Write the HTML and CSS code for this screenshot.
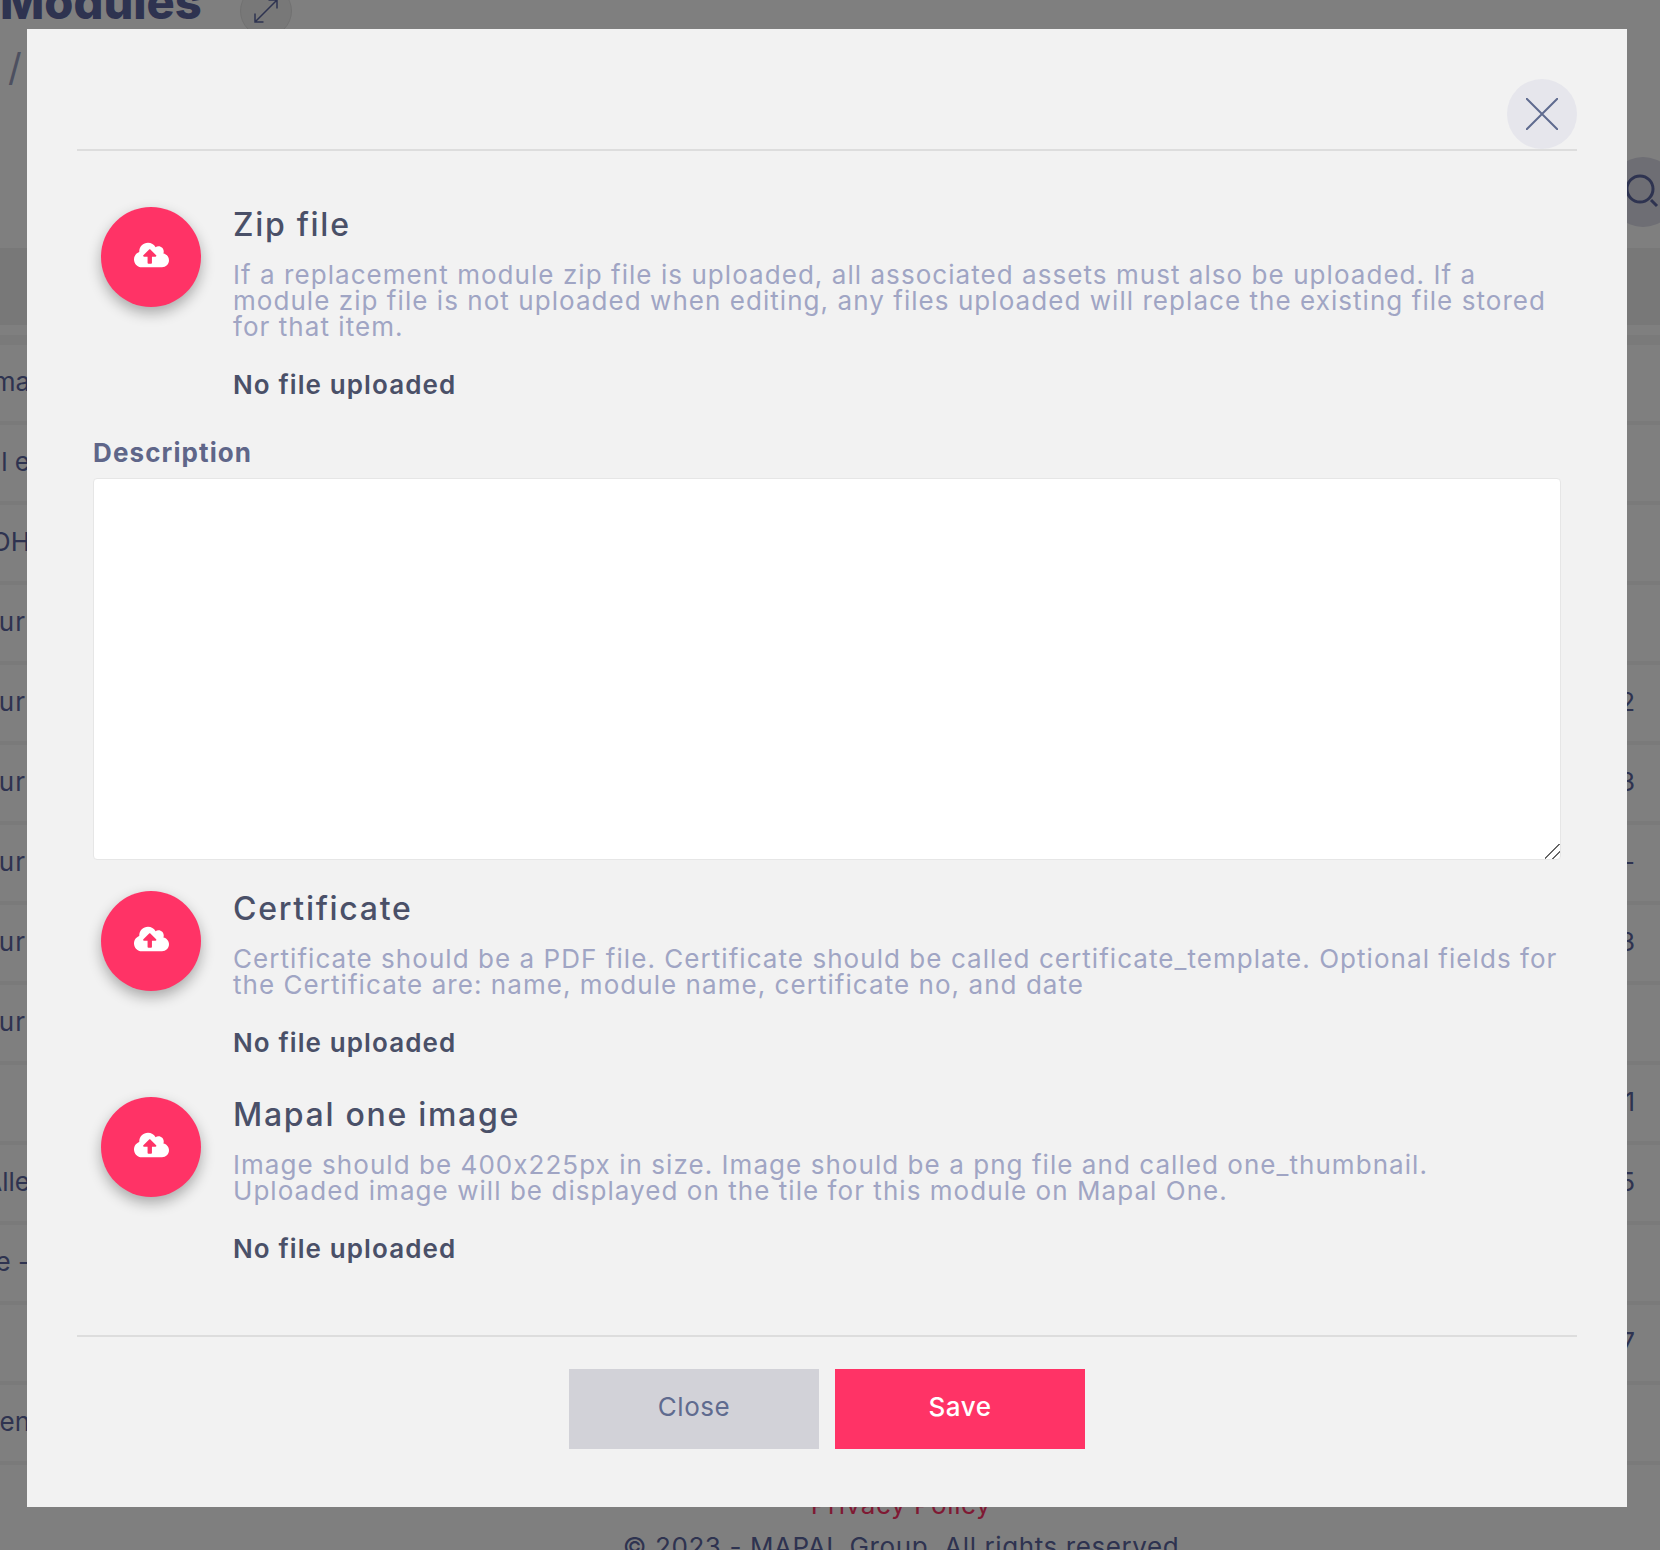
FILE: index.html
```html
<!DOCTYPE html>
<html lang="en">
<head>
    <meta charset="UTF-8">
    <meta name="viewport" content="width=device-width, initial-scale=1.0">
    <title>Modules</title>
    <link rel="stylesheet" href="styles.css">
</head>
<body>
    <div class="page">
        <div class="page-head">
            <h1 class="page-title">Modules</h1>
            <span class="expand-btn">
                <svg viewBox="0 0 24 24" width="24" height="24" fill="none" stroke="#5c66a0" stroke-width="1.5">
                    <path d="M1 23 23 1M14.5 1H23V9.5M1 14.5V23H9.5"/>
                </svg>
            </span>
        </div>
        <div class="crumbs">/</div>
        <div class="search-row">
            <span class="search-btn">
                <svg viewBox="0 0 36 36" width="36" height="36" fill="none" stroke="#5c66a0" stroke-width="3">
                    <circle cx="15" cy="15" r="13"/>
                    <path d="M26 26l6 6"/>
                </svg>
            </span>
        </div>
        <div class="table-head"></div>
        <div class="table">
            <div class="row"><span class="cell-name">ma</span><span class="cell-end cell-hidden">0</span></div>
            <div class="row"><span class="cell-name">l e</span><span class="cell-end"></span></div>
            <div class="row"><span class="cell-name">OH</span><span class="cell-end"></span></div>
            <div class="row"><span class="cell-name cell-short">ur</span><span class="cell-end cell-hidden teal">0</span></div>
            <div class="row"><span class="cell-name cell-short">ur</span><span class="cell-end">2</span></div>
            <div class="row"><span class="cell-name cell-short">ur</span><span class="cell-end">3</span></div>
            <div class="row"><span class="cell-name cell-short">ur</span><span class="cell-end">-</span></div>
            <div class="row"><span class="cell-name cell-short">ur</span><span class="cell-end">3</span></div>
            <div class="row"><span class="cell-name cell-short">ur</span><span class="cell-end"></span></div>
            <div class="row"><span class="cell-name"></span><span class="cell-end">1</span></div>
            <div class="row"><span class="cell-name">Alle</span><span class="cell-end">5</span></div>
            <div class="row"><span class="cell-name">e -</span><span class="cell-end"></span></div>
            <div class="row"><span class="cell-name"></span><span class="cell-end">7</span></div>
            <div class="row"><span class="cell-name">en</span><span class="cell-end"></span></div>
        </div>
        <div class="page-foot">
            <a class="privacy">Privacy Policy</a>
            <p class="copyright">© 2023 - MAPAL Group. All rights reserved</p>
        </div>
    </div>

    <div class="overlay">
        <div class="modal">
            <div class="modal-header">
                <button class="close-x">
                    <svg viewBox="0 0 32 32" width="32" height="32" fill="none" stroke="#5f6b8f" stroke-width="2">
                        <path d="M0 0 32 32M32 0 0 32"/>
                    </svg>
                </button>
            </div>

            <div class="modal-body">
                <div class="upload">
                    <button class="upload-btn">
                        <svg class="cloud" viewBox="0 0 640 512" fill="#fff">
                            <path d="M537.6 226.6c4.1-10.7 6.4-22.4 6.4-34.6 0-53-43-96-96-96-19.7 0-38.1 6-53.3 16.2C367 64.2 315.3 32 256 32c-88.4 0-160 71.6-160 160 0 2.7.1 5.4.2 8.1C40.2 219.8 0 273.2 0 336c0 79.5 64.5 144 144 144h368c70.7 0 128-57.3 128-128 0-61.9-44-113.6-102.4-125.4zM393.4 288H328v112c0 8.8-7.2 16-16 16h-48c-8.8 0-16-7.2-16-16V288h-65.4c-14.3 0-21.4-17.2-11.3-27.3l105.4-105.4c6.2-6.2 16.4-6.2 22.6 0l105.4 105.4c10.1 10.1 2.9 27.3-11.3 27.3z"/>
                        </svg>
                    </button>
                    <div class="upload-text">
                        <h3>Zip file</h3>
                        <p class="hint">If a replacement module zip file is uploaded, all associated assets must also be uploaded. If a module zip file is not uploaded when editing, any files uploaded will replace the existing file stored for that item.</p>
                        <p class="status">No file uploaded</p>
                    </div>
                </div>

                <label class="field-label" for="description">Description</label>
                <textarea class="field-input" id="description"></textarea>

                <div class="upload upload-cert">
                    <button class="upload-btn">
                        <svg class="cloud" viewBox="0 0 640 512" fill="#fff">
                            <path d="M537.6 226.6c4.1-10.7 6.4-22.4 6.4-34.6 0-53-43-96-96-96-19.7 0-38.1 6-53.3 16.2C367 64.2 315.3 32 256 32c-88.4 0-160 71.6-160 160 0 2.7.1 5.4.2 8.1C40.2 219.8 0 273.2 0 336c0 79.5 64.5 144 144 144h368c70.7 0 128-57.3 128-128 0-61.9-44-113.6-102.4-125.4zM393.4 288H328v112c0 8.8-7.2 16-16 16h-48c-8.8 0-16-7.2-16-16V288h-65.4c-14.3 0-21.4-17.2-11.3-27.3l105.4-105.4c6.2-6.2 16.4-6.2 22.6 0l105.4 105.4c10.1 10.1 2.9 27.3-11.3 27.3z"/>
                        </svg>
                    </button>
                    <div class="upload-text">
                        <h3>Certificate</h3>
                        <p class="hint">Certificate should be a PDF file. Certificate should be called certificate_template. Optional fields for the Certificate are: name, module name, certificate no, and date</p>
                        <p class="status">No file uploaded</p>
                    </div>
                </div>

                <div class="upload upload-image">
                    <button class="upload-btn">
                        <svg class="cloud" viewBox="0 0 640 512" fill="#fff">
                            <path d="M537.6 226.6c4.1-10.7 6.4-22.4 6.4-34.6 0-53-43-96-96-96-19.7 0-38.1 6-53.3 16.2C367 64.2 315.3 32 256 32c-88.4 0-160 71.6-160 160 0 2.7.1 5.4.2 8.1C40.2 219.8 0 273.2 0 336c0 79.5 64.5 144 144 144h368c70.7 0 128-57.3 128-128 0-61.9-44-113.6-102.4-125.4zM393.4 288H328v112c0 8.8-7.2 16-16 16h-48c-8.8 0-16-7.2-16-16V288h-65.4c-14.3 0-21.4-17.2-11.3-27.3l105.4-105.4c6.2-6.2 16.4-6.2 22.6 0l105.4 105.4c10.1 10.1 2.9 27.3-11.3 27.3z"/>
                        </svg>
                    </button>
                    <div class="upload-text">
                        <h3>Mapal one image</h3>
                        <p class="hint">Image should be 400x225px in size. Image should be a png file and called one_thumbnail. Uploaded image will be displayed on the tile for this module on Mapal One.</p>
                        <p class="status">No file uploaded</p>
                    </div>
                </div>
            </div>

            <div class="modal-footer">
                <button class="btn btn-close">Close</button>
                <button class="btn btn-save">Save</button>
            </div>
        </div>
    </div>
</body>
</html>
```

FILE: styles.css
```css
html, body {
    margin: 0;
    padding: 0;
    width: 100%;
    height: 100%;
    overflow: hidden;
    font-family: 'Inter', 'Noto Sans', sans-serif;
    font-feature-settings: "calt" 0;
    background-color: #fff;
}

/* page behind the dialog */
.page {
    color: #5c66a0;
    margin-top: -28px;
}
.page-head {
    display: flex;
    align-items: center;
    height: 60px;
}
.page-title {
    margin: 0;
    font-size: 47px;
    line-height: 60px;
    font-weight: 800;
}
.expand-btn {
    display: flex;
    align-items: center;
    justify-content: center;
    flex: none;
    width: 50px;
    height: 50px;
    margin: 18px 0 0 38px;
    border: 1px solid #e2e2e2;
    border-radius: 50%;
    background: #f0f0f0;
}
.crumbs {
    height: 44px;
    padding: 15px 0 0 8px;
    font-size: 38px;
    line-height: 40px;
    color: #9aa0c0;
}
.search-row {
    display: flex;
    justify-content: flex-end;
    height: 163px;
    padding-top: 66px;
    box-sizing: border-box;
    margin-right: -18px;
}
.search-btn {
    display: flex;
    align-items: center;
    justify-content: flex-start;
    width: 70px;
    height: 70px;
    padding-left: 17px;
    box-sizing: border-box;
    border-radius: 50%;
    background: #dcdce8;
}
.table-head {
    height: 77px;
    margin-top: -6px;
    margin-bottom: 10px;
    background: #f0f0f0;
}
.table {
    border-top: 10px solid #f4f4f4;
}
.row {
    display: flex;
    justify-content: space-between;
    align-items: center;
    height: 72px;
    padding-bottom: 4px;
    border-bottom: 4px solid #f4f4f4;
    font-size: 26px;
}
.cell-name {
    display: flex;
    justify-content: flex-end;
    width: 30px;
    white-space: nowrap;
}
.cell-short {
    width: 26px;
    letter-spacing: 1px;
}
.cell-end {
    padding-right: 25px;
}
.cell-hidden {
    padding-right: 32px;
}
.teal {
    color: #4f9aa8;
}
.page-foot {
    text-align: center;
    font-size: 26px;
    letter-spacing: 0.6px;
    padding-left: 142px;
}
.privacy {
    display: block;
    margin-top: 24px;
    line-height: 32px;
    color: #ff3366;
}
.copyright {
    margin: 10px 0 0;
    line-height: 32px;
}

/* dialog */
.overlay {
    position: fixed;
    top: 0;
    left: 0;
    right: 0;
    bottom: 0;
    background: rgba(0, 0, 0, 0.5);
    padding: 29px 0 0 27px;
}
.modal {
    width: 1600px;
    height: 1478px;
    box-sizing: border-box;
    padding: 50px 50px 58px;
    background: #f2f2f2;
    display: flex;
    flex-direction: column;
}
.modal-header {
    display: flex;
    justify-content: flex-end;
    height: 70px;
    border-bottom: 2px solid #ddd;
}
.close-x {
    display: flex;
    align-items: center;
    justify-content: center;
    width: 70px;
    height: 70px;
    padding: 0;
    border: 0;
    border-radius: 50%;
    background: #e6e6ec;
    cursor: pointer;
}
.modal-body {
    flex: 1;
    padding: 56px 16px 0;
}
.upload {
    display: flex;
    align-items: flex-start;
    padding-left: 8px;
}
.upload-btn {
    flex: none;
    display: flex;
    align-items: center;
    justify-content: center;
    width: 100px;
    height: 100px;
    padding: 0;
    border: 0;
    border-radius: 50%;
    background: #ff3366;
    box-shadow: 0 6px 14px rgba(0, 0, 0, 0.3);
    cursor: pointer;
}
.cloud {
    width: 35px;
    height: 28px;
    margin-bottom: 4px;
}
.upload-text {
    flex: 1;
    padding-left: 32px;
}
.upload-text h3 {
    margin: 0;
    font-size: 32px;
    line-height: 36px;
    font-weight: 500;
    letter-spacing: 1.7px;
    color: #4a5068;
}
.hint {
    margin: 19px 0 0;
    font-size: 26px;
    line-height: 26px;
    letter-spacing: 1.05px;
    color: #a0a5c4;
}
.status {
    margin: 29px 0 0;
    font-size: 26px;
    line-height: 32px;
    font-weight: 600;
    letter-spacing: 1.1px;
    color: #4a5068;
}
.field-label {
    display: block;
    margin-top: 36px;
    font-size: 26px;
    line-height: 32px;
    font-weight: 700;
    letter-spacing: 1.1px;
    color: #5f6689;
}
.field-input {
    display: block;
    width: 100%;
    height: 382px;
    margin-top: 9px;
    box-sizing: border-box;
    background: #fff;
    border: 1px solid #e6e6e6;
    border-radius: 4px;
}
.field-input::-webkit-resizer {
    background: linear-gradient(135deg, transparent 0 46%, #666 46% 53%, transparent 53% 72%, #666 72% 79%, transparent 79%);
}
.upload-cert {
    margin-top: 31px;
}
.upload-image {
    margin-top: 38px;
}
.modal-footer {
    display: flex;
    justify-content: center;
    gap: 16px;
    border-top: 2px solid #ddd;
    padding-top: 32px;
}
.btn {
    width: 250px;
    height: 80px;
    padding: 0 0 5px;
    border: 0;
    font-family: inherit;
    font-size: 26px;
    letter-spacing: 0.5px;
    cursor: pointer;
}
.btn-close {
    background: #d2d2d8;
    color: #5f6b8f;
}
.btn-save {
    background: #ff3366;
    color: #fff;
    font-weight: 500;
}
```
